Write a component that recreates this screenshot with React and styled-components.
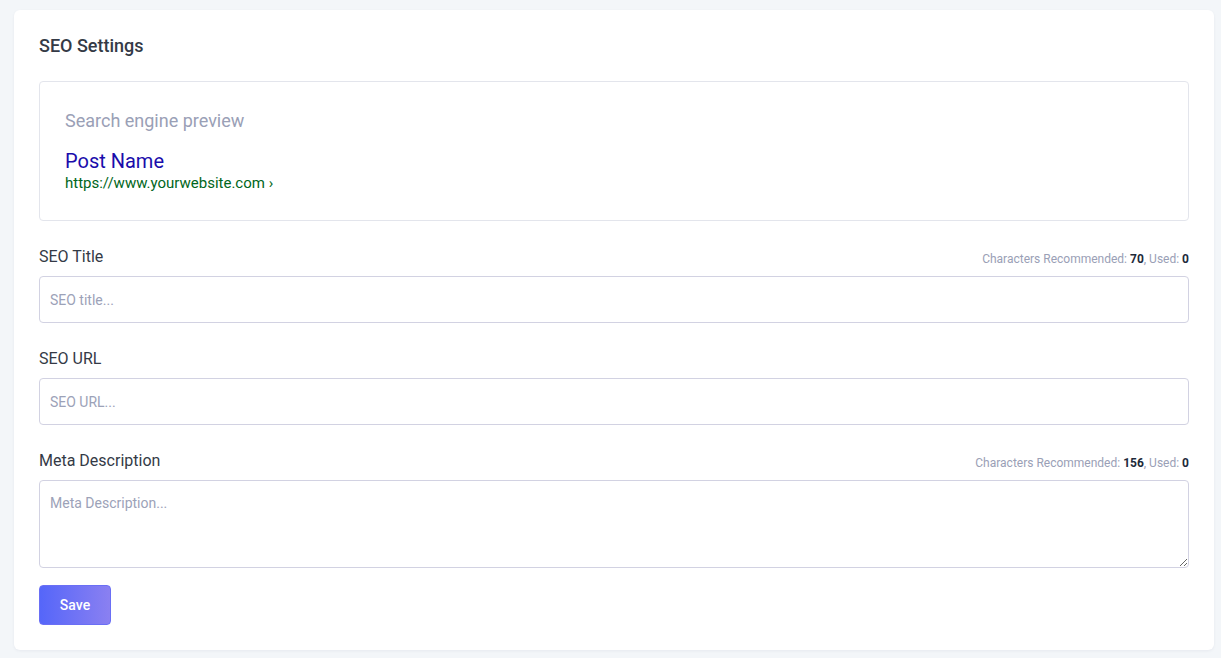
import React from "react";
import styled, { createGlobalStyle } from "styled-components";

const GlobalStyle = createGlobalStyle`
    * {
        box-sizing: border-box;
    }

    body {
        margin: 0;
        background: #f3f6f9;
        font-family: Roboto, "Liberation Sans", sans-serif;
    }
`;

const Page = styled.div`
    padding: 10px 7px 8px 14px;
`;

const Card = styled.section`
    background: #ffffff;
    border-radius: 6px;
    box-shadow: 0 1px 3px rgba(30, 40, 80, 0.06);
    padding: 25px 25px 25px;
`;

const Title = styled.h2`
    margin: 0 0 24px;
    font-size: 18px;
    line-height: 22px;
    font-weight: 500;
    color: #343a46;
`;

const Preview = styled.div`
    border: 1px solid #e3e5ec;
    border-radius: 4px;
    padding: 27px 25px 26px;
    margin-bottom: 25px;
`;

const PreviewHeading = styled.div`
    font-size: 18px;
    line-height: 24px;
    color: #9aa0b6;
    margin-bottom: 16px;
`;

const PostName = styled.div`
    font-size: 20px;
    line-height: 24px;
    color: #1a0dab;
`;

const PostUrl = styled.div`
    font-size: 15px;
    line-height: 21px;
    color: #006621;
`;

const Field = styled.div`
    margin-bottom: ${(props) => props.gap || 25}px;
`;

const LabelRow = styled.div`
    display: flex;
    align-items: center;
    justify-content: space-between;
    height: 20px;
    padding-top: 1px;
    margin-bottom: 10px;
`;

const Label = styled.label`
    font-size: 16px;
    color: #343a46;
`;

const Counter = styled.span`
    font-size: 12px;
    color: #9aa0b6;
    padding-top: 5px;

    b {
        color: #1e2a3a;
        font-weight: 700;
    }
`;

const Input = styled.input`
    display: block;
    width: 100%;
    height: 47px;
    border: 1px solid #d2d2e2;
    border-radius: 4px;
    padding: 0 10px;
    font-family: inherit;
    font-size: 14px;
    color: #343a46;
    outline: none;

    &::placeholder {
        color: #9ca2b8;
    }
`;

const TextArea = styled.textarea`
    display: block;
    width: 100%;
    height: 88px;
    border: 1px solid #d2d2e2;
    border-radius: 4px;
    padding: 13px 10px;
    font-family: inherit;
    font-size: 14px;
    line-height: 19px;
    color: #343a46;
    outline: none;

    &::placeholder {
        color: #9ca2b8;
    }
`;

const SaveButton = styled.button`
    width: 72px;
    height: 40px;
    border: 1px solid #6a6ff5;
    border-radius: 4px;
    background: linear-gradient(90deg, #5566f9 0%, #8a80f1 100%);
    color: #ffffff;
    font-family: inherit;
    font-size: 14px;
    font-weight: 500;
    cursor: pointer;
`;

function CharCount({ recommended }) {
    return (
        <Counter>
            Characters Recommended: <b>{recommended}</b>, Used: <b>0</b>
        </Counter>
    );
}

export default function App() {
    return (
        <>
            <GlobalStyle />
            <Page>
                <Card>
                    <Title>SEO Settings</Title>

                    <Preview>
                        <PreviewHeading>Search engine preview</PreviewHeading>
                        <PostName>Post Name</PostName>
                        <PostUrl>https://www.yourwebsite.com ›</PostUrl>
                    </Preview>

                    <Field>
                        <LabelRow>
                            <Label>SEO Title</Label>
                            <CharCount recommended={70} />
                        </LabelRow>
                        <Input placeholder="SEO title..." />
                    </Field>

                    <Field>
                        <LabelRow>
                            <Label>SEO URL</Label>
                        </LabelRow>
                        <Input placeholder="SEO URL..." />
                    </Field>

                    <Field gap={17}>
                        <LabelRow>
                            <Label>Meta Description</Label>
                            <CharCount recommended={156} />
                        </LabelRow>
                        <TextArea placeholder="Meta Description..." />
                    </Field>

                    <SaveButton>Save</SaveButton>
                </Card>
            </Page>
        </>
    );
}
